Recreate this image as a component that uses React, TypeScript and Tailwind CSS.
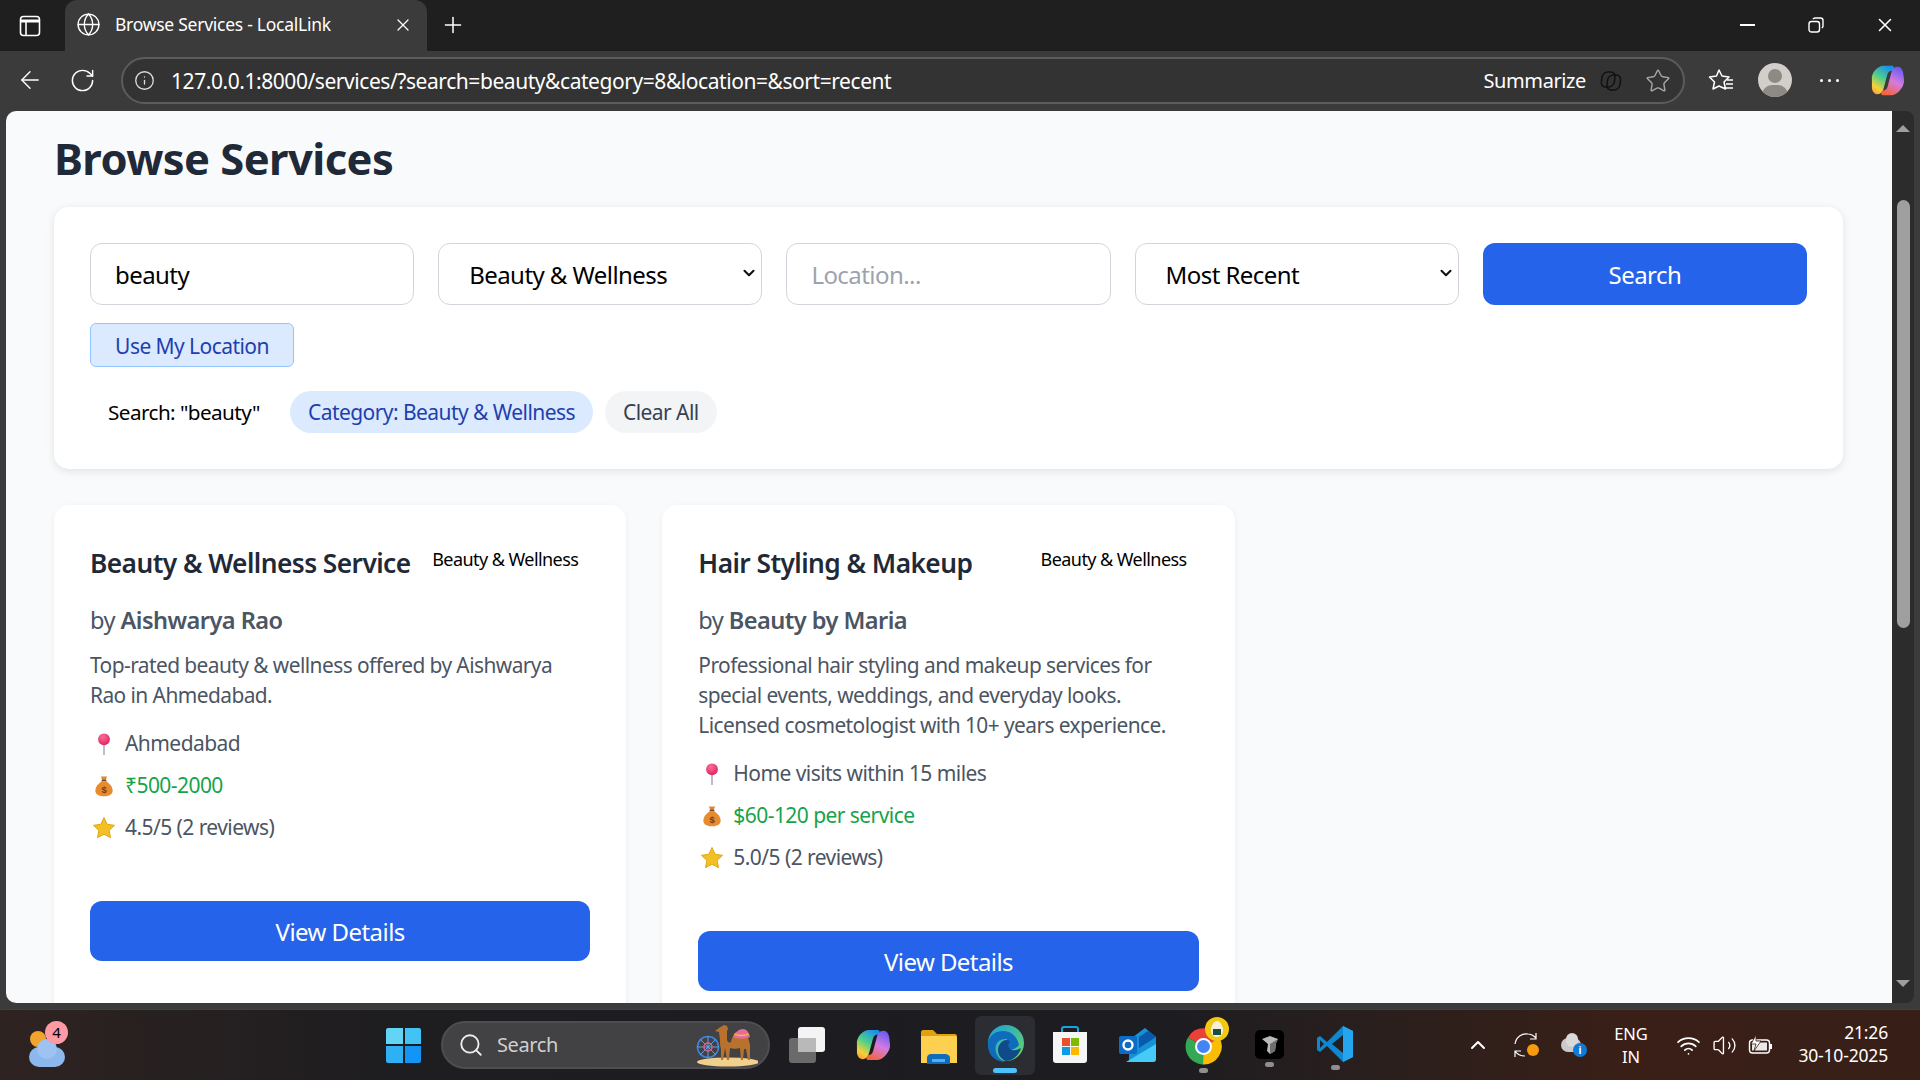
import { ArrowLeft, ChevronDown, Info, Plus, RotateCw, Search, Star, X, ChevronUp, Globe, Wifi, Volume2 } from "lucide-react";

const services = [
  {
    title: "Beauty & Wellness Service",
    provider: "Aishwarya Rao",
    description: ["Top-rated beauty & wellness offered by Aishwarya", "Rao in Ahmedabad."],
    location: "Ahmedabad",
    price: "₹500-2000",
    rating: "4.5/5 (2 reviews)",
  },
  {
    title: "Hair Styling & Makeup",
    provider: "Beauty by Maria",
    description: [
      "Professional hair styling and makeup services for",
      "special events, weddings, and everyday looks.",
      "Licensed cosmetologist with 10+ years experience.",
    ],
    location: "Home visits within 15 miles",
    price: "$60-120 per service",
    rating: "5.0/5 (2 reviews)",
  },
];

const PinEmoji = () => (
  <svg viewBox="0 0 24 28" className="h-[22px] w-[22px]">
    <defs>
      <radialGradient id="pinHead" cx="0.4" cy="0.3" r="0.8">
        <stop offset="0" stopColor="#ff6f96" />
        <stop offset="1" stopColor="#d81b5c" />
      </radialGradient>
    </defs>
    <rect x="11" y="13" width="2" height="15" fill="#b7a9bb" />
    <circle cx="12" cy="8" r="7.5" fill="url(#pinHead)" />
  </svg>
);

const MoneyEmoji = () => (
  <svg viewBox="0 0 24 28" className="h-[22px] w-[22px]">
    <path d="M8 2h8l-2 5h-4z" fill="#d98a3a" />
    <rect x="9" y="6" width="6" height="2" fill="#6e4a2a" />
    <path d="M9 8h6c4 3 8 7 8 12 0 5-5 7-11 7S1 25 1 20c0-5 4-9 8-12z" fill="#e88a2e" />
    <text x="12" y="23" textAnchor="middle" fontSize="12" fontWeight="700" fill="#7a3b12" fontFamily="Liberation Sans, sans-serif">$</text>
  </svg>
);

const StarEmoji = () => (
  <svg viewBox="0 0 24 24" className="h-[24px] w-[24px]">
    <path
      d="M12 1.5l3.2 6.8 7.3 1-5.3 5.1 1.3 7.3L12 18.2l-6.5 3.5 1.3-7.3L1.5 9.3l7.3-1z"
      fill="#f2c025"
      stroke="#e2a812"
      strokeWidth="1"
      strokeLinejoin="round"
    />
  </svg>
);

const InfoRow = ({ icon, children }: { icon: React.ReactNode; children: React.ReactNode }) => (
  <div className="flex items-center gap-[7px]">
    <div className="flex w-[28px] justify-center">{icon}</div>
    {children}
  </div>
);

const ServiceCard = ({ service }: { service: (typeof services)[number] }) => (
  <div className="rounded-[15px] bg-white px-9 pb-[60px] pt-9 shadow-[0_2px_6px_rgba(0,0,0,0.06)]">
    <div className="flex items-start justify-between">
      <h3 className="h-[44px] whitespace-nowrap text-[26.3px] font-semibold leading-[44px] text-[#1f2937]">{service.title}</h3>
      <span className="mt-[-3px] shrink-0 whitespace-nowrap px-3 text-[18px] leading-[42px] text-black">Beauty &amp; Wellness</span>
    </div>
    <p className="mt-[17px] text-[23.6px] leading-[36px] text-[#4b5563]">
      by <strong className="font-semibold">{service.provider}</strong>
    </p>
    <div className="mt-[12px] text-[20.9px] leading-[30px] text-[#4b5563]">
      {service.description.map((line) => (
        <p key={line}>{line}</p>
      ))}
    </div>
    <div className="mt-[18px] flex flex-col gap-[11px] text-[21px] leading-[31px] text-[#4b5563]">
      <InfoRow icon={<PinEmoji />}>
        <span>{service.location}</span>
      </InfoRow>
      <InfoRow icon={<MoneyEmoji />}>
        <span className="text-[#16a34a]">{service.price}</span>
      </InfoRow>
      <InfoRow icon={<StarEmoji />}>
        <span>{service.rating}</span>
      </InfoRow>
    </div>
    <button className="mt-[58px] h-[60px] w-full rounded-[12px] bg-[#2563eb] pt-[2px] text-[24px] text-white">View Details</button>
  </div>
);

const FilterSelect = ({ label }: { label: string }) => (
  <div className="relative min-w-0">
    <select className="h-[62px] w-full appearance-none rounded-[12px] border border-[#d1d5db] bg-white pl-[30px] pt-[1px] text-black">
      <option>{label}</option>
    </select>
    <ChevronDown size={18} strokeWidth={2.8} className="pointer-events-none absolute right-[4px] top-[21px] text-[#111111]" />
  </div>
);

const Page = () => (
  <main className="min-w-0 flex-1 overflow-hidden rounded-l-[10px] bg-[#f9fafb] pl-[48px] pr-[49px] font-['Noto_Sans',sans-serif] tracking-[-0.035em]">
    <h1 className="mt-[17px] h-[60px] text-[43.5px] font-bold leading-[60px] text-[#1f2937]">Browse Services</h1>
    <section className="mt-[19px] rounded-[15px] bg-white p-9 shadow-[0_2px_8px_rgba(0,0,0,0.1)]">
      <div className="grid grid-cols-5 gap-6 text-[24px]">
        <input
          readOnly
          value="beauty"
          className="h-[62px] min-w-0 rounded-[12px] border border-[#d1d5db] px-6 pt-[1px] text-black"
        />
        <FilterSelect label="Beauty & Wellness" />
        <input
          readOnly
          placeholder="Location..."
          className="h-[62px] min-w-0 rounded-[12px] border border-[#d1d5db] px-6 pt-[1px] text-black placeholder:text-[#9ca3af]"
        />
        <FilterSelect label="Most Recent" />
        <button className="h-[62px] rounded-[12px] bg-[#2563eb] pt-[1px] text-white">Search</button>
      </div>
      <button className="mt-[18px] h-[44px] w-[204px] rounded-[6px] border border-[#93c5fd] bg-[#dbeafe] pt-[3px] text-[21px] text-[#1e40af]">
        Use My Location
      </button>
      <div className="mt-6 flex items-center gap-3 text-[21px] leading-[41px]">
        <span className="px-[18px] pt-[1px] text-[20.7px] text-black">Search: "beauty"</span>
        <span className="rounded-full bg-[#dbeafe] px-[18px] pt-[1px] text-[#1e40af]">Category: Beauty &amp; Wellness</span>
        <span className="rounded-full bg-[#f3f4f6] px-[18px] pt-[1px] text-[#374151]">Clear All</span>
      </div>
    </section>
    <div className="mt-9 grid grid-cols-3 items-start gap-9">
      {services.map((service) => (
        <ServiceCard key={service.title} service={service} />
      ))}
    </div>
  </main>
);

const Scrollbar = () => (
  <div className="mr-[6px] flex w-[22px] shrink-0 flex-col items-center rounded-r-[8px] bg-[#2c2c2c] pb-[16px] pt-[14px]">
    <div className="h-0 w-0 border-x-[7px] border-b-[7px] border-x-transparent border-b-[#9f9f9f]" />
    <div className="mt-[68px] h-[428px] w-[13px] rounded-full bg-[#9f9f9f]" />
    <div className="mt-auto h-0 w-0 border-x-[7px] border-t-[7px] border-x-transparent border-t-[#9f9f9f]" />
  </div>
);

const CopilotLogo = ({ id, size }: { id: string; size: number }) => (
  <svg width={size} height={size} viewBox="0 0 36 36">
    <defs>
      <linearGradient id={`${id}a`} x1="0.7" y1="0" x2="0.2" y2="1">
        <stop offset="0" stopColor="#1c8fe8" />
        <stop offset="0.45" stopColor="#4fd08a" />
        <stop offset="0.8" stopColor="#f5d13a" />
        <stop offset="1" stopColor="#f8a63a" />
      </linearGradient>
      <linearGradient id={`${id}b`} x1="0.7" y1="0" x2="0.3" y2="1">
        <stop offset="0" stopColor="#6a5cf0" />
        <stop offset="0.5" stopColor="#d47be0" />
        <stop offset="1" stopColor="#f4633f" />
      </linearGradient>
    </defs>
    <path d="M14 2h9c1 0 2 1 2 2l-1 3c-3 0-5 1-6 4l-4 15c-1 4-3 7-7 7-3 0-5-2-6-6L1 17C0 10 7 2 14 2z" fill={`url(#${id}a)`} />
    <path d="M22 34h-9c-1 0-2-1-2-2l1-3c3 0 5-1 6-4l4-15c1-4 3-7 7-7 3 0 5 2 6 6l1 8c1 7-7 17-14 17z" fill={`url(#${id}b)`} />
  </svg>
);

const TabStrip = () => (
  <div className="flex h-[51px] items-end bg-[#1f1f1f] text-white">
    <div className="flex h-[51px] w-[65px] items-center justify-center pr-[5px]">
      <svg width="22" height="22" viewBox="0 0 22 22" fill="none" stroke="white" strokeWidth="1.6">
        <rect x="1.5" y="1.5" width="19" height="19" rx="3" />
        <path d="M1.5 6h19" strokeWidth="3" />
        <path d="M7 6v14" />
      </svg>
    </div>
    <div className="flex h-[51px] w-[362px] items-center rounded-t-[12px] bg-[#3b3b3b] pb-[2px] pl-[11px] pr-[14px]">
      <Globe size={25} strokeWidth={1.3} />
      <span className="ml-[14px] flex-1 text-[17.5px] tracking-[-0.015em]">Browse Services - LocalLink</span>
      <X size={20} strokeWidth={1.5} />
    </div>
    <div className="flex h-[51px] w-[52px] items-center justify-center pb-[2px]">
      <Plus size={26} strokeWidth={1.4} />
    </div>
    <div className="ml-auto flex h-[51px] items-center pb-[2px] pr-[24px]">
      <div className="h-[2px] w-[15px] bg-white" />
      <svg width="16" height="16" viewBox="0 0 16 16" fill="none" stroke="white" strokeWidth="1.4" className="ml-[53px]">
        <rect x="1" y="4.5" width="10.5" height="10.5" rx="2.5" />
        <path d="M5 2.2c.4-.7 1-1.2 2-1.2h5.5C14 1 15 2 15 3.5V9c0 1-.5 1.6-1.2 2" />
      </svg>
      <X size={22} strokeWidth={1.7} className="ml-[50px]" />
    </div>
  </div>
);

const Toolbar = () => (
  <div className="flex h-[60px] items-start bg-[#3b3b3b] text-white">
    <div className="flex h-[58px] w-[59px] items-center justify-center">
      <ArrowLeft size={28} strokeWidth={1.2} />
    </div>
    <div className="flex h-[58px] w-[62px] items-center justify-center pr-[15px]">
      <RotateCw size={27} strokeWidth={1.3} />
    </div>
    <div className="mt-[6px] flex h-[47px] w-[1564px] items-center rounded-full border-2 border-[#5c5c5c] bg-[#333333] pl-[11px] pr-[12px]">
      <Info size={21} strokeWidth={1.5} className="text-[#dddddd]" />
      <span className="ml-[16px] flex-1 pt-[2px] text-[21px] tracking-[-0.021em]">
        127.0.0.1:8000/services/?search=beauty&amp;category=8&amp;location=&amp;sort=recent
      </span>
      <span className="pt-[1px] text-[20px] tracking-[-0.02em]">Summarize</span>
      <svg width="24" height="22" viewBox="0 0 24 22" fill="none" stroke="#111111" strokeWidth="1.5" className="ml-[12px]">
        <rect x="2" y="2" width="13" height="15" rx="5" transform="skewX(-8) translate(3 0)" />
        <rect x="8" y="5" width="13" height="15" rx="5" transform="skewX(-8) translate(3 0)" />
      </svg>
      <Star size={26} strokeWidth={1.3} className="ml-[23px] text-[#a8a8a8]" />
    </div>
    <div className="flex h-[58px] flex-1 items-center">
      <svg width="26" height="24" viewBox="0 0 26 24" fill="none" stroke="white" strokeWidth="1.5" strokeLinejoin="round" className="ml-[23px]">
        <path d="M11 2l3 6 7 1-5 5 1.5 7L11 18l-6 3 1.5-7-5-5 7-1z" />
        <path d="M19 12h6M18 16h7M16 20h9" />
      </svg>
      <div className="relative ml-[24px] h-[34px] w-[34px] overflow-hidden rounded-full bg-[#d2cfca]">
        <div className="mx-auto mt-[6px] h-[14px] w-[14px] rounded-full bg-[#8d8985]" />
        <div className="absolute -bottom-[8px] left-[4px] h-[20px] w-[26px] rounded-full bg-[#8d8985]" />
      </div>
      <div className="ml-[28px] flex gap-[5px]">
        <div className="h-[3px] w-[3px] rounded-full bg-white" />
        <div className="h-[3px] w-[3px] rounded-full bg-white" />
        <div className="h-[3px] w-[3px] rounded-full bg-white" />
      </div>
      <div className="ml-[32px]">
        <CopilotLogo id="cpToolbar" size={33} />
      </div>
    </div>
  </div>
);

const WindowsLogo = () => (
  <div className="grid h-[35px] w-[35px] grid-cols-2 gap-[2px]">
    <div className="rounded-tl-[2px] bg-[#62d5f7]" />
    <div className="rounded-tr-[2px] bg-[#43c3f3]" />
    <div className="rounded-bl-[2px] bg-[#2fb0f4]" />
    <div className="rounded-br-[2px] bg-[#1295f4]" />
  </div>
);

const Camel = () => (
  <svg width="62" height="44" viewBox="0 0 62 44">
    <ellipse cx="32" cy="39" rx="31" ry="4.5" fill="#f1cf8d" />
    <circle cx="12" cy="24" r="10.5" fill="none" stroke="#3f83d8" strokeWidth="1.6" />
    <path d="M12 13v22M1 24h22M4 16l16 16M20 16L4 32" stroke="#5aa0e6" strokeWidth="1" />
    <circle cx="12" cy="24" r="4" fill="none" stroke="#e0608a" strokeWidth="1.5" />
    <path d="M23 5l5-3 3 1 1 3-1 2v8c0 3 2 4 4 3 1-6 5-11 10-11 5 0 7 5 8 10l1 4v15h-2l-2-11h-2l-1 11h-2l-1-12c-3 1-7 1-10 0l-1 12h-2l-2-12-2 12h-2V26c-1-3-1-6-1-9l-1-8-4-1z" fill="#b9722e" />
    <path d="M37 14c2-5 6-8 10-8 4 0 6 4 7 8-5 2-12 2-17 0z" fill="#e86aa0" />
    <path d="M38 11c5 2 10 2 15 0" stroke="#f2c230" strokeWidth="1.3" fill="none" />
  </svg>
);

const TaskViewIcon = () => (
  <svg width="36" height="36" viewBox="0 0 36 36">
    <rect x="0" y="11" width="27" height="25" rx="3" fill="#6a6a6a" />
    <rect x="9" y="0" width="27" height="25" rx="3" fill="#f4f4f4" />
    <rect x="9" y="11" width="18" height="14" fill="#b9b9b9" />
  </svg>
);

const ExplorerIcon = () => (
  <svg width="36" height="36" viewBox="0 0 36 36">
    <path d="M0 4c0-1 1-2 2-2h10l4 4h18c1 0 2 1 2 2v4H0z" fill="#dfa012" />
    <path d="M0 8h34c1 0 2 1 2 2v25H0z" fill="#fdd04f" />
    <path d="M6 36V30c0-3 2-4 4-4h14c2 0 5 1 5 4v6z" fill="#0f6cbd" />
    <rect x="11" y="31" width="13" height="3" fill="#4ab2f1" />
  </svg>
);

const EdgeIcon = () => (
  <svg width="37" height="38" viewBox="0 0 37 38">
    <defs>
      <linearGradient id="edgeTop" x1="0" y1="0" x2="1" y2="1">
        <stop offset="0" stopColor="#1a9fe0" />
        <stop offset="1" stopColor="#6ad85c" />
      </linearGradient>
    </defs>
    <circle cx="19" cy="19" r="18" fill="url(#edgeTop)" />
    <path d="M1 21C1 11 9 7 16 7c8 0 14 5 16 14-2 3-6 5-10 5-5 0-5-3-5-3 0-3 3-5 3-8-8-1-13 5-11 13 1 4 5 9 10 10C8 38 1 31 1 21z" fill="#0f6cbd" />
    <path d="M13 20c3-5 9-5 10-2-3 2-2 7 2 8 4 1 7-1 9-2-2 8-9 13-15 13-8-3-10-12-6-17z" fill="#114a8b" />
  </svg>
);

const StoreIcon = () => (
  <svg width="36" height="38" viewBox="0 0 36 38">
    <path d="M10 9V3c0-1 1-2 2-2h12c1 0 2 1 2 2v6" fill="none" stroke="#1aa1e2" strokeWidth="2" />
    <path d="M1 6h34v28c0 2-1 3-3 3H4c-2 0-3-1-3-3z" fill="#f5f5f5" />
    <rect x="10" y="12" width="8" height="8" fill="#e8512d" />
    <rect x="19" y="12" width="8" height="8" fill="#7fb900" />
    <rect x="10" y="21" width="8" height="8" fill="#0d9be4" />
    <rect x="19" y="21" width="8" height="8" fill="#fcb900" />
  </svg>
);

const OutlookIcon = () => (
  <svg width="37" height="34" viewBox="0 0 37 34">
    <path d="M14 9L26 0l11 9v22c0 2-1 3-3 3H10V14z" fill="#1591d8" />
    <path d="M20 9L29 3l8 6-17 11z" fill="#0a59ad" />
    <path d="M7 34l30-18v15c0 2-1 3-3 3z" fill="#46cbf6" />
    <rect x="0" y="8" width="18" height="18" rx="2" fill="#0c6cc7" />
    <circle cx="9" cy="17" r="4.5" fill="none" stroke="white" strokeWidth="2.4" />
  </svg>
);

const ChromeIcon = () => (
  <div className="relative h-[37px] w-[37px]">
    <svg width="37" height="37" viewBox="0 0 37 37">
      <path d="M18.5 18.5L3 9.5A18 18 0 0 1 34.6 10z" fill="#e94235" />
      <path d="M18.5 18.5L3 9.5A18 18 0 0 0 18 36.5z" fill="#34a853" />
      <path d="M18.5 18.5L34.6 10A18 18 0 0 1 18 36.5z" fill="#fbbc05" />
      <circle cx="18.5" cy="18.5" r="8.5" fill="white" />
      <circle cx="18.5" cy="18.5" r="6.5" fill="#4285f4" />
    </svg>
    <div className="absolute -right-[7px] -top-[11px] flex h-[24px] w-[24px] items-center justify-center rounded-full bg-[#f2c811]">
      <svg width="14" height="16" viewBox="0 0 14 16">
        <path d="M7 0c3 0 6 5 6 9s-2 7-6 7-6-3-6-7 3-9 6-9z" fill="#f3efd9" />
        <rect x="3" y="8" width="8" height="6" fill="#174f45" />
      </svg>
    </div>
  </div>
);

const BlackAppIcon = () => (
  <div className="flex h-[29px] w-[29px] items-center justify-center rounded-[5px] bg-black">
    <svg width="18" height="20" viewBox="0 0 18 20">
      <path d="M1 4l8-3 8 3-2 4-1 8-5 3-3-3 1-7z" fill="#b9b9b9" />
      <path d="M9 9l8-5-2 4-1 8-5 3z" fill="#6f6f6f" />
    </svg>
  </div>
);

const VSCodeIcon = () => (
  <svg width="36" height="36" viewBox="0 0 36 36">
    <path d="M26 0l10 5v26l-10 5L10 20l-7 6-3-2v-12l3-2 7 6z" fill="#0f86d0" />
    <path d="M26 0v36l10-5V5z" fill="#24a5ee" />
    <path d="M26 9L15 18l11 9z" fill="#1f1f24" />
    <path d="M3 14l4 4-4 4z" fill="#1f1f24" />
  </svg>
);

const Dot = () => <div className="mx-auto mt-[3px] h-[5px] w-[9px] rounded-full bg-[#8f8f8f]" />;

const Taskbar = () => (
  <footer className="flex h-[71px] items-center border-t border-[#45403e] bg-[linear-gradient(90deg,#2e2321_0%,#1e1d20_20%,#1c1c21_60%,#2a1f1d_72%,#3a1f17_85%,#371f18_100%)] text-white">
    <div className="relative ml-[29px] h-[44px] w-[38px]">
      <div className="absolute left-[1px] top-[8px] h-[16px] w-[16px] rounded-full bg-[#f0a42b]" />
      <div className="absolute bottom-0 left-0 h-[20px] w-[36px] rounded-[10px] bg-[#8db8ee]" />
      <div className="absolute bottom-[8px] left-[8px] h-[20px] w-[20px] rounded-full bg-[#9cc3f2]" />
      <div className="absolute -top-[2px] left-[16px] flex h-[23px] w-[23px] items-center justify-center rounded-full bg-[#ff9aa5] text-[15px] text-black">4</div>
    </div>
    <div className="ml-[319px]">
      <WindowsLogo />
    </div>
    <div className="ml-[20px] flex h-[48px] w-[329px] items-center rounded-full border-2 border-[#4e4e50] bg-[#424244] pl-[15px] pr-[10px]">
      <Search size={26} strokeWidth={1.7} className="text-[#eeeeee]" />
      <span className="ml-[13px] flex-1 text-[20px] tracking-[-0.02em] text-[#cfcfcf]">Search</span>
      <Camel />
    </div>
    <div className="ml-[19px] flex h-[58px] items-center">
      <TaskViewIcon />
      <div className="ml-[31px]">
        <CopilotLogo id="cpTask" size={34} />
      </div>
      <div className="ml-[31px] pt-[1px]">
        <ExplorerIcon />
      </div>
      <div className="ml-[18px] flex h-[59px] w-[60px] flex-col items-center justify-center rounded-[6px] bg-[#2c2d33] pt-[6px]">
        <EdgeIcon />
        <div className="mt-[6px] h-[5px] w-[24px] rounded-full bg-[#4cc2ff]" />
      </div>
      <div className="ml-[17px]">
        <StoreIcon />
      </div>
      <div className="ml-[31px]">
        <OutlookIcon />
      </div>
      <div className="ml-[29px] mt-[10px]">
        <ChromeIcon />
        <Dot />
      </div>
      <div className="ml-[33px] mt-[10px]">
        <BlackAppIcon />
        <div className="h-[8px]">
          <Dot />
        </div>
      </div>
      <div className="ml-[33px] mt-[8px]">
        <VSCodeIcon />
        <div className="h-[8px]">
          <Dot />
        </div>
      </div>
    </div>
    <div className="ml-[113px]">
      <ChevronUp size={24} strokeWidth={2} />
    </div>
    <svg width="26" height="26" viewBox="0 0 26 26" fill="none" stroke="white" strokeWidth="1.2" className="ml-[24px]">
      <path d="M1 12C2 5 8 1 14 2c3 0 6 2 8 4M22 1v6h-6" />
      <path d="M1 25v-6h6M1 19c2 3 6 5 10 5" />
      <circle cx="19" cy="18" r="6" fill="#f79a0e" stroke="none" />
    </svg>
    <div className="relative ml-[21px] h-[24px] w-[26px]">
      <div className="absolute left-0 top-[5px] h-[14px] w-[20px] rounded-full bg-[#c9c9c9]" />
      <div className="absolute left-[5px] top-0 h-[14px] w-[12px] rounded-full bg-[#d9d9d9]" />
      <div className="absolute bottom-0 right-0 flex h-[14px] w-[14px] items-center justify-center rounded-full bg-[#0f7bd8] text-[10px] font-bold leading-none">i</div>
    </div>
    <div className="ml-[21px] w-[46px] text-center text-[16.5px] leading-[23px]">
      <p>ENG</p>
      <p>IN</p>
    </div>
    <Wifi size={25} strokeWidth={1.7} className="ml-[22px]" />
    <Volume2 size={25} strokeWidth={1.3} className="ml-[11px]" />
    <svg width="26" height="22" viewBox="0 0 26 22" fill="none" stroke="white" strokeWidth="1.4" className="ml-[11px]">
      <rect x="1.5" y="6" width="20" height="13" rx="3" />
      <path d="M23 10v5" strokeWidth="2" />
      <rect x="4" y="8.5" width="15" height="8" fill="white" stroke="none" opacity="0.9" />
      <path d="M8 1L3 10h5l-2 7 7-10H8z" fill="white" stroke="#371f18" strokeWidth="0.8" />
    </svg>
    <div className="mb-[3px] ml-[8px] w-[106px] text-right text-[17.5px] leading-[23px] tracking-[-0.01em]">
      <p>21:26</p>
      <p>30-10-2025</p>
    </div>
  </footer>
);

export default function App() {
  return (
    <div className="flex h-[1080px] w-[1920px] flex-col overflow-hidden bg-[#3b3b3b] font-['Noto_Sans',sans-serif]">
      <TabStrip />
      <Toolbar />
      <div className="flex h-[892px] pl-[6px]">
        <Page />
        <Scrollbar />
      </div>
      <div className="h-[6px] bg-[#3b3b3b]" />
      <Taskbar />
    </div>
  );
}
